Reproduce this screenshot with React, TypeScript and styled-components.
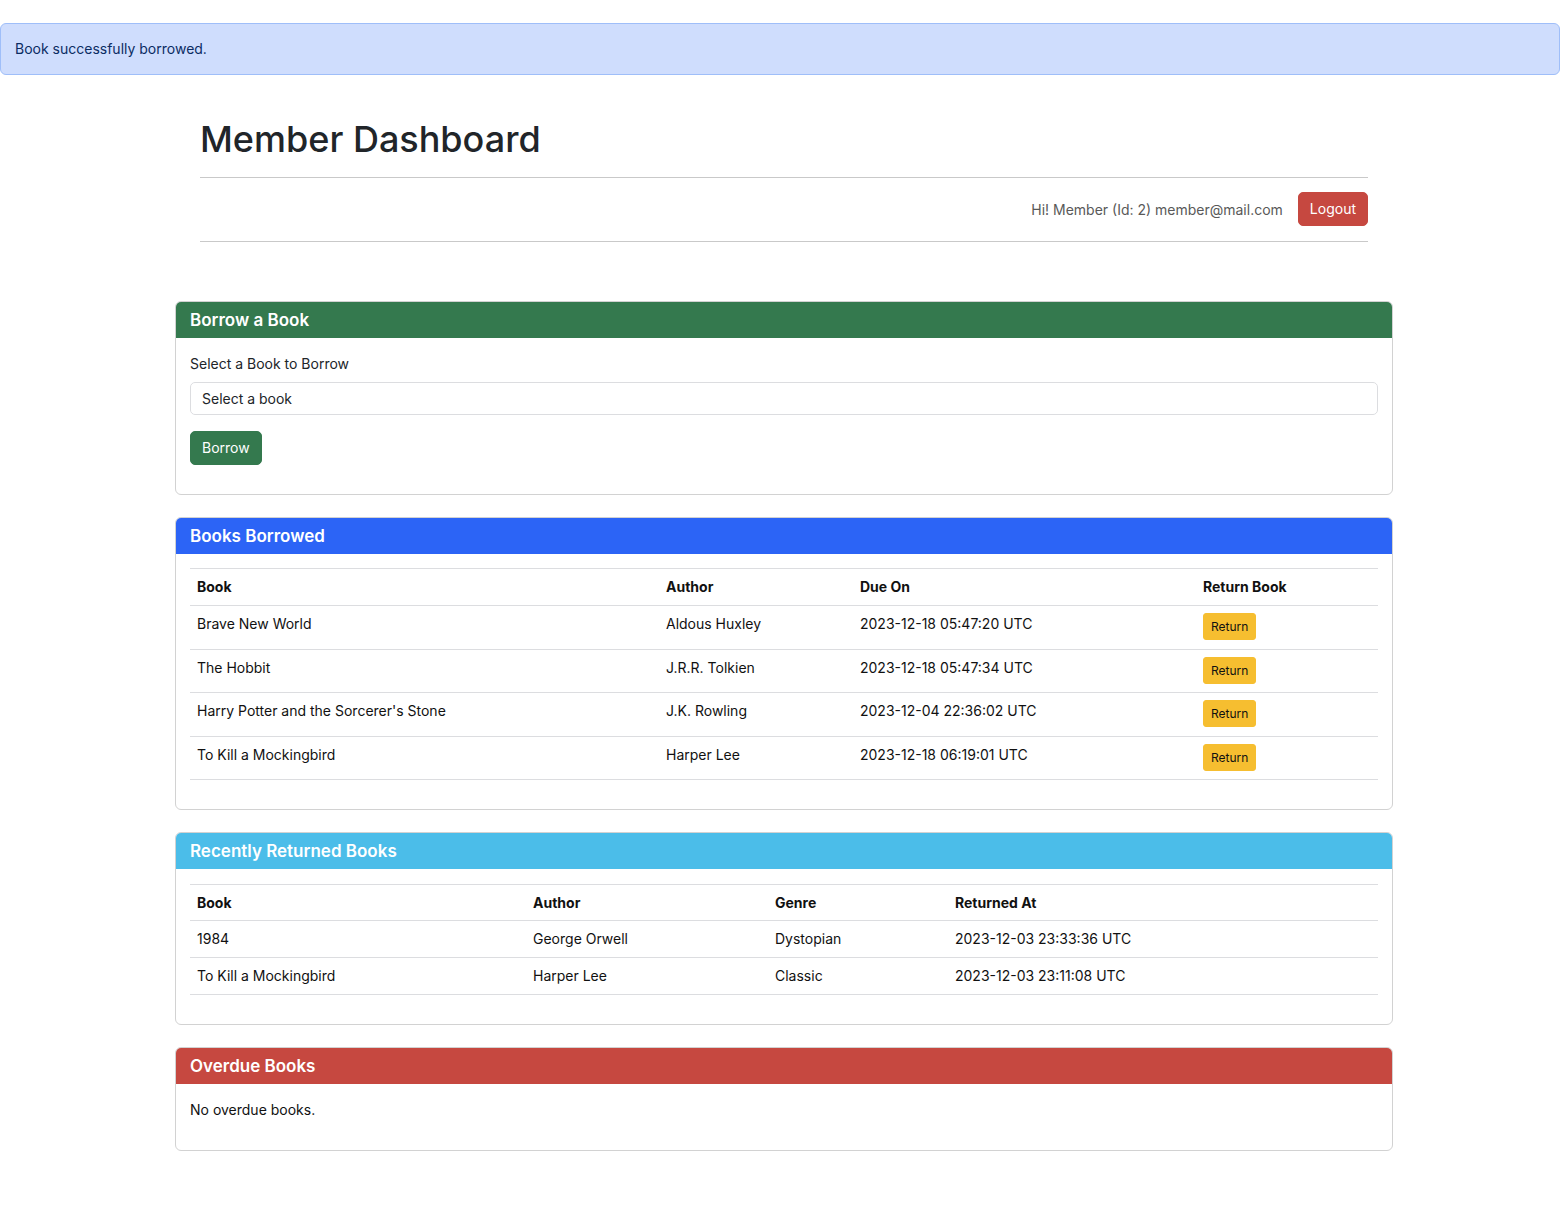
import React from "react";
import styled, { createGlobalStyle } from "styled-components";

const GlobalStyle = createGlobalStyle`
  * { box-sizing: border-box; }
  body {
    margin: 0;
    background: #fff;
    font-family: Inter, "Noto Sans", "Liberation Sans", sans-serif;
    font-size: 14px;
    line-height: 1.5;
    color: #212529;
  }
`;

const Alert = styled.div`
  margin-top: 23px;
  padding: 15px 14px;
  background: #cfddfd;
  border: 1px solid #9fbef9;
  border-radius: 6px;
  color: #0b2c63;
  font-size: 14px;
  line-height: 20px;
  height: 52px;
`;

const Container = styled.main`
  margin-left: 175px;
  width: 1218px;
  padding-bottom: 40px;
`;

const Header = styled.header`
  margin: 43px 25px 59px;
`;

const Title = styled.h1`
  margin: 0 0 16px;
  font-size: 36px;
  font-weight: 500;
  line-height: 43px;
  color: #212529;
`;

const Rule = styled.hr`
  margin: 0;
  border: 0;
  border-top: 1px solid #c9c9c9;
`;

const UserBar = styled.div`
  display: flex;
  justify-content: flex-end;
  align-items: center;
  gap: 15px;
  padding: 14px 0 15px;
`;

const Greeting = styled.span`
  color: #595959;
  font-size: 14px;
`;

const Button = styled.button<{ $bg: string; $fg?: string; $small?: boolean }>`
  font-family: inherit;
  font-size: ${(p) => (p.$small ? "12px" : "14px")};
  line-height: ${(p) => (p.$small ? "17px" : "20px")};
  padding: ${(p) => (p.$small ? "4px 7px" : "6px 11px")};
  background: ${(p) => p.$bg};
  color: ${(p) => p.$fg || "#fff"};
  border: 1px solid ${(p) => p.$bg};
  border-radius: ${(p) => (p.$small ? "3px" : "5px")};
  cursor: pointer;
`;

const Stack = styled.div`
  display: flex;
  flex-direction: column;
  gap: 22px;
`;

const Card = styled.section`
  border: 1px solid #d2d2d2;
  border-radius: 6px;
  overflow: hidden;
`;

const CardHeader = styled.div<{ $bg: string }>`
  background: ${(p) => p.$bg};
  color: #fff;
  padding: 8px 14px 7px;
  font-size: 17px;
  font-weight: 600;
  line-height: 21px;
`;

const CardBody = styled.div<{ $table?: boolean }>`
  padding: ${(p) => (p.$table ? "14px" : "15px")} 14px 15px;
`;

const Label = styled.label`
  display: block;
  margin-bottom: 8px;
  font-size: 14px;
  line-height: 21px;
  color: #212529;
`;

const Select = styled.div`
  height: 33px;
  padding: 0 11px;
  display: flex;
  align-items: center;
  border: 1px solid #dcdde0;
  border-radius: 5px;
  font-size: 14px;
  color: #212529;
  margin-bottom: 16px;
`;

const FormEnd = styled.div`
  margin-bottom: 14px;
`;

const Table = styled.table`
  width: 100%;
  border-collapse: collapse;
  border-top: 1px solid #dcdde0;
  margin-bottom: 14px;
  color: #111;
`;

const Th = styled.th<{ $compact?: boolean }>`
  text-align: left;
  font-weight: 700;
  padding: ${(p) => (p.$compact ? "7px 7px 7px" : "7px 7px 8px")};
  line-height: 21px;
  border-bottom: 1px solid #dcdde0;
`;

const Td = styled.td`
  padding: 7px 7px 8px;
  line-height: 21px;
  border-bottom: 1px solid #dcdde0;
  vertical-align: top;
`;

const ButtonCell = styled.td`
  padding: 7px 7px 8.5px;
  border-bottom: 1px solid #dcdde0;
  vertical-align: top;
`;

const Message = styled.p`
  margin: 0 0 15px;
  line-height: 21px;
  color: #111;
`;

const borrowed = [
  ["Brave New World", "Aldous Huxley", "2023-12-18 05:47:20 UTC"],
  ["The Hobbit", "J.R.R. Tolkien", "2023-12-18 05:47:34 UTC"],
  ["Harry Potter and the Sorcerer's Stone", "J.K. Rowling", "2023-12-04 22:36:02 UTC"],
  ["To Kill a Mockingbird", "Harper Lee", "2023-12-18 06:19:01 UTC"],
];

const returned = [
  ["1984", "George Orwell", "Dystopian", "2023-12-03 23:33:36 UTC"],
  ["To Kill a Mockingbird", "Harper Lee", "Classic", "2023-12-03 23:11:08 UTC"],
];

export default function App() {
  return (
    <>
      <GlobalStyle />
      <Alert>Book successfully borrowed.</Alert>
      <Container>
        <Header>
          <Title>Member Dashboard</Title>
          <Rule />
          <UserBar>
            <Greeting>Hi! Member (Id: 2) member@mail.com</Greeting>
            <Button $bg="#c64840">Logout</Button>
          </UserBar>
          <Rule />
        </Header>

        <Stack>
          <Card>
            <CardHeader $bg="#34794e">Borrow a Book</CardHeader>
            <CardBody>
              <Label>Select a Book to Borrow</Label>
              <Select>Select a book</Select>
              <FormEnd>
                <Button $bg="#34794e">Borrow</Button>
              </FormEnd>
            </CardBody>
          </Card>

          <Card>
            <CardHeader $bg="#2c64f6">Books Borrowed</CardHeader>
            <CardBody $table>
              <Table>
                <colgroup>
                  <col style={{ width: 469 }} />
                  <col style={{ width: 194 }} />
                  <col style={{ width: 343 }} />
                  <col />
                </colgroup>
                <thead>
                  <tr>
                    <Th>Book</Th>
                    <Th>Author</Th>
                    <Th>Due On</Th>
                    <Th>Return Book</Th>
                  </tr>
                </thead>
                <tbody>
                  {borrowed.map((r) => (
                    <tr key={r[0]}>
                      <Td>{r[0]}</Td>
                      <Td>{r[1]}</Td>
                      <Td>{r[2]}</Td>
                      <ButtonCell>
                        <Button $small $bg="#f6be30" $fg="#111">
                          Return
                        </Button>
                      </ButtonCell>
                    </tr>
                  ))}
                </tbody>
              </Table>
            </CardBody>
          </Card>

          <Card>
            <CardHeader $bg="#4bbde9">Recently Returned Books</CardHeader>
            <CardBody>
              <Table>
                <colgroup>
                  <col style={{ width: 336 }} />
                  <col style={{ width: 242 }} />
                  <col style={{ width: 180 }} />
                  <col />
                </colgroup>
                <thead>
                  <tr>
                    <Th $compact>Book</Th>
                    <Th $compact>Author</Th>
                    <Th $compact>Genre</Th>
                    <Th $compact>Returned At</Th>
                  </tr>
                </thead>
                <tbody>
                  {returned.map((r) => (
                    <tr key={r[0]}>
                      <Td>{r[0]}</Td>
                      <Td>{r[1]}</Td>
                      <Td>{r[2]}</Td>
                      <Td>{r[3]}</Td>
                    </tr>
                  ))}
                </tbody>
              </Table>
            </CardBody>
          </Card>

          <Card>
            <CardHeader $bg="#c64840">Overdue Books</CardHeader>
            <CardBody>
              <Message>No overdue books.</Message>
            </CardBody>
          </Card>
        </Stack>
      </Container>
    </>
  );
}
